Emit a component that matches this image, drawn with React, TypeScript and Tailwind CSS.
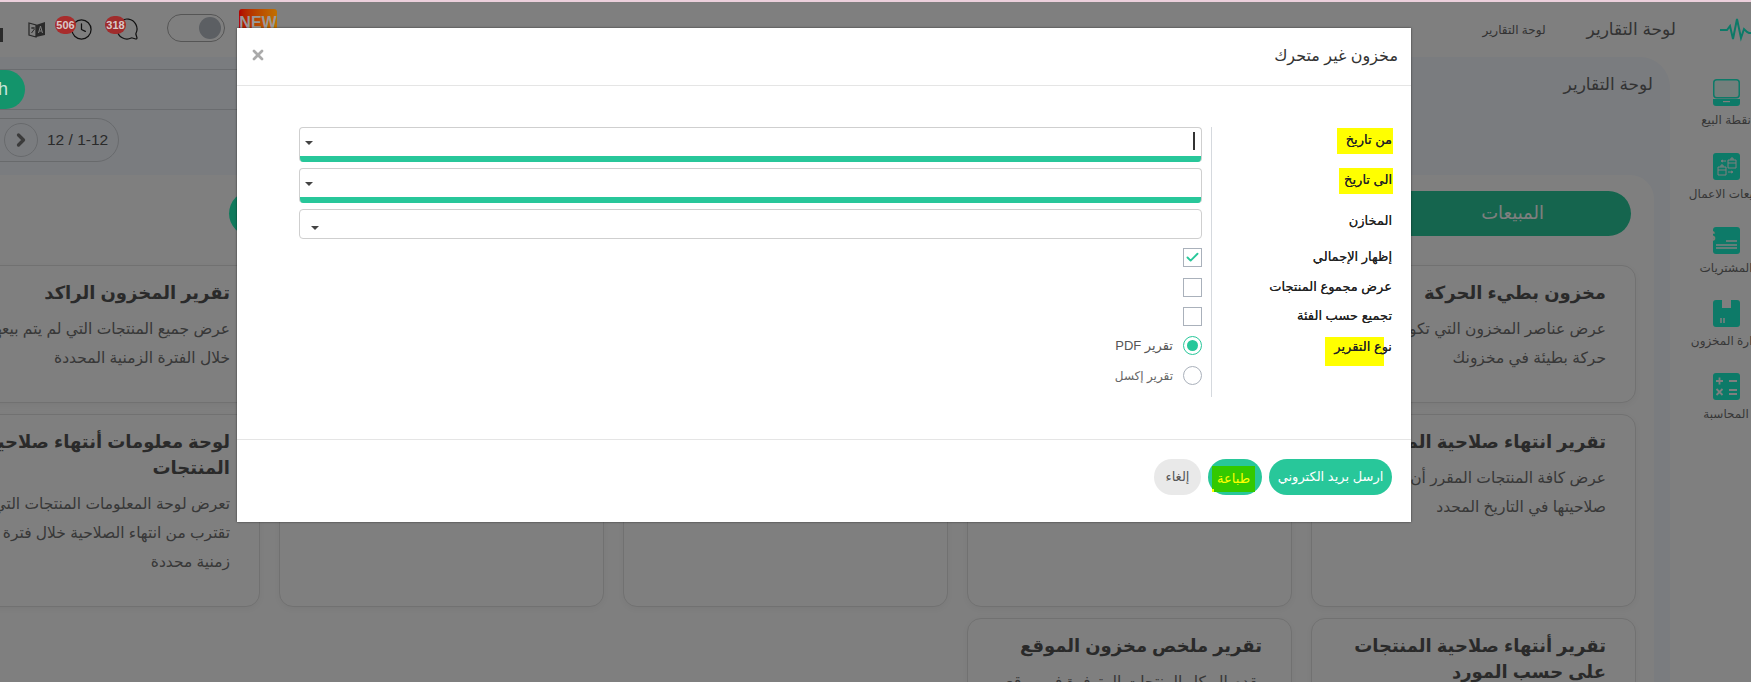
import React from "react";
import { Clock, MessageCircle, ChevronRight, X, Check } from "lucide-react";

function Card({ title, lines }: { title: string[]; lines: string[] }) {
  return (
    <div className="rounded-[14px] border border-[#e2e2e2] bg-white pt-[14px] pr-[29px] shadow-[0_2px_8px_rgba(0,0,0,0.05)] overflow-hidden">
      {title.map((t) => (
        <div key={t} className="text-[18px] leading-[26px] font-bold text-[#555] whitespace-nowrap">{t}</div>
      ))}
      <div className="mt-[8px]">
        {lines.map((l) => (
          <div key={l} className="text-[15.5px] leading-[29px] text-[#707070] whitespace-nowrap">{l}</div>
        ))}
      </div>
    </div>
  );
}

function Tile({ children }: { children: React.ReactNode }) {
  return <svg width="27" height="27" viewBox="0 0 27 27" className="block">{children}</svg>;
}

function NavItem({ label, children, gap }: { label: string; children: React.ReactNode; gap: string }) {
  return (
    <div className={`flex flex-col items-center w-[100px] mr-[-25px] ${gap}`}>
      {children}
      <div className="mt-[6px] text-[12px] leading-[16px] text-[#6f6f6f] whitespace-nowrap">{label}</div>
    </div>
  );
}

const T = "#1af4d0";

function Field({ bar, children }: { bar?: boolean; children?: React.ReactNode }) {
  return (
    <div className="relative h-[35px] rounded-[4px] border border-b-0 border-[#cfcfcf] bg-white overflow-hidden">
      <span className="absolute left-[5px] top-[13px] w-0 h-0 border-x-[4px] border-x-transparent border-t-[4px] border-t-[#444]" />
      {children}
      {bar && <div className="absolute left-0 right-0 bottom-0 h-[6px] bg-[#28c79a]" />}
    </div>
  );
}

function Box({ checked }: { checked?: boolean }) {
  return (
    <div className="flex h-[19px] w-[19px] items-center justify-center border border-[#aab1bb] bg-white">
      {checked && <Check size={15} strokeWidth={3} className="text-[#28c79a]" />}
    </div>
  );
}

function FormLabel({ text, mark, top }: { text: string; mark?: string; top: string }) {
  return (
    <div className={`flex ${top}`}>
      <span className={`h-[26px] pr-[1px] leading-[24px] text-[13px] text-[#222] [text-shadow:0_0_0.6px_#333] whitespace-nowrap ${mark ?? ""}`}>{text}</span>
    </div>
  );
}

export default function App() {
  return (
    <div dir="rtl" className="relative h-[682px] w-[1751px] overflow-hidden border-t-2 border-[#ecd0dc] bg-white font-['Liberation_Sans','Noto_Sans','DejaVu_Sans',sans-serif]">
      {/* header */}
      <header className="flex h-[55px] items-center">
        <svg width="34" height="26" viewBox="0 0 34 26" className="mr-[-3px] shrink-0">
          <path d="M0 13h7l3-4 3 13 4-20 4 19 3-9 3 3 2 1h5" fill="none" stroke={T} strokeWidth="2" />
        </svg>
        <div className="mr-[44px] text-[17px] text-[#666] whitespace-nowrap">لوحة التقارير</div>
        <div className="mr-[41px] text-[12px] text-[#666] whitespace-nowrap">لوحة التقارير</div>
        <div dir="ltr" className="mr-auto flex h-full items-center">
          <div className="relative h-full w-[300px]">
            <span className="absolute left-0 top-[26px] h-[14px] w-[3px] bg-[#555]" />
            <svg width="18" height="20" viewBox="0 0 18 20" className="absolute left-[28px] top-[18px]">
              <path d="M1 3l7 2v12l-7-2z" fill="#fff" stroke="#555" strokeWidth="1.3" />
              <path d="M8 5l9-3v13l-9 2z" fill="#555" />
              <path d="M3 8h4M5 7v2M3.500 13l3-4" stroke="#555" fill="none" />
              <path d="M10.500 13l2-7 2 7M11.200 11h2.600" stroke="#fff" fill="none" />
            </svg>
            <Clock size={23} strokeWidth={1.3} className="absolute left-[70px] top-[16px] text-[#222]" />
            <span className="absolute z-20 left-[55px] top-[14px] flex h-[18px] w-[21px] items-center justify-center rounded-full bg-[#a82c2c] text-[11px] font-bold text-[#d8c8c8]">506</span>
            <MessageCircle size={24} strokeWidth={1.2} className="absolute left-[115px] top-[15px] text-[#222] -scale-x-100" />
            <span className="absolute z-20 left-[105px] top-[14px] flex h-[18px] w-[21px] items-center justify-center rounded-full bg-[#a02c2c] text-[11px] font-bold text-[#d8c8c8]">318</span>
            <div className="absolute left-[167px] top-[12px] h-[28px] w-[58px] rounded-full border border-[#aaa] bg-white">
              <span className="absolute right-[3px] top-[2px] block h-[22px] w-[22px] rounded-full bg-[#b8bec6]" />
            </div>
            <div className="absolute z-20 left-[239px] top-[7px] flex h-[24px] w-[38px] justify-center overflow-hidden rounded-[3px] bg-gradient-to-r from-[#b00000] to-[#c07000] text-[16px] leading-[28px] font-bold text-[#9a9a9a]">NEW</div>
          </div>
        </div>
      </header>

      <div className="flex h-[625px]">
        {/* sidebar */}
        <aside className="flex w-[81px] shrink-0 flex-col items-start pt-[22px]">
          <NavItem label="نقطة البيع" gap="mb-[25px]">
            <Tile>
              <rect x="0.750" y="0.750" width="25.500" height="18" rx="3" fill="#e8fff9" stroke={T} strokeWidth="1.5" />
              <path d="M0 20h27v4a3 3 0 0 1-3 3H3a3 3 0 0 1-3-3z" fill={T} />
              <rect x="10" y="22" width="7" height="1.200" fill="#fff" />
            </Tile>
          </NavItem>
          <NavItem label="مبيعات الاعمال" gap="mb-[25px]">
            <Tile>
              <rect width="27" height="27" rx="3" fill={T} />
              <path d="M15 7h8v8h-8zM15 10h8M18 7V5h2v2M5 14h8v8H5zM5 17h8M8 14v-2h2v2M13 8H9M10 7l-2 1 2 1M15 19h4M18 18l2 1-2 1" fill="none" stroke="#fff" strokeWidth="1" />
            </Tile>
          </NavItem>
          <NavItem label="المشتريات" gap="mb-[24px]">
            <Tile>
              <rect width="27" height="27" rx="3" fill={T} />
              <text x="2" y="14" fontSize="15" fontWeight="700" fill="#fff" fontFamily="Liberation Sans">$</text>
              <path d="M13 14h11M3 18h21M3 21h21" stroke="#fff" strokeWidth="1.400" />
            </Tile>
          </NavItem>
          <NavItem label="إدارة المخزون" gap="mb-[24px]">
            <Tile>
              <path d="M3 0h6v8h9V0h6a3 3 0 0 1 3 3v21a3 3 0 0 1-3 3H3a3 3 0 0 1-3-3V3a3 3 0 0 1 3-3z" fill={T} />
              <path d="M8 18v5M11 18v5" stroke="#fff" strokeWidth="1.500" />
            </Tile>
          </NavItem>
          <NavItem label="المحاسبة" gap="">
            <Tile>
              <rect width="27" height="27" rx="3" fill={T} />
              <path d="M3 8h7M6.500 4.500v7M16 8h8M3.500 16l6 6M9.500 16l-6 6M16 17h8M16 21h8" stroke="#fff" strokeWidth="1.800" />
            </Tile>
          </NavItem>
        </aside>

        {/* panel */}
        <main className="min-w-0 flex-1 overflow-hidden rounded-tr-[30px] bg-[#f4f8fe]">
          <div className="flex h-[118px] justify-between">
            <div className="pr-[17px] pt-[15px] text-[17px] leading-[26px] text-[#666] whitespace-nowrap">لوحة التقارير</div>
            <div dir="ltr" className="w-[700px] pt-[12px]">
              <div className="h-[41px] border-y border-[#d5d9de]">
                <div className="relative z-20 ml-[-70px] flex h-[39px] w-[95px] items-center justify-end rounded-full bg-[#13946b] pr-[17px] text-[18px] text-[#c8e6dc]">Search</div>
              </div>
              <div className="mt-[8px] ml-[-40px] flex h-[44px] w-[159px] items-center rounded-full border border-[#d0d4d9]">
                <span className="ml-[3px] h-[34px] w-[34px] rounded-full border border-[#d0d4d9]" />
                <span className="ml-[6px] flex h-[34px] w-[34px] items-center justify-center rounded-full border border-[#d0d4d9]">
                  <ChevronRight size={20} strokeWidth={4} className="text-[#777]" />
                </span>
                <span className="ml-[9px] text-[15.5px] text-[#555] whitespace-nowrap">12 / 1-12</span>
              </div>
            </div>
          </div>
          <section className="mr-[16px] h-[507px] rounded-tr-[24px] bg-white pr-[18px] pt-[16px]">
            <div className="mr-[5px] flex h-[45px] w-[1402px] justify-between">
              <div className="flex w-[400px] items-center rounded-full bg-[#2acb9c] pr-[87px] text-[18px] text-[#fff]">
                <span className="whitespace-nowrap">المبيعات</span>
              </div>
              <div className="w-[400px] rounded-full bg-[#20f4b8]" />
            </div>
            <div className="mt-[29px] grid grid-cols-[repeat(5,325px)] grid-rows-[138px_193px_120px] gap-x-[19px] gap-y-[11px]">
              <Card title={["مخزون بطيء الحركة"]} lines={["عرض عناصر المخزون التي تكون", "حركة بطيئة في مخزونك"]} />
              <Card title={[]} lines={[]} />
              <Card title={[]} lines={[]} />
              <Card title={[]} lines={[]} />
              <Card title={["تقرير المخزون الراكد"]} lines={["عرض جميع المنتجات التي لم يتم بيعها", "خلال الفترة الزمنية المحددة"]} />
              <Card title={["تقرير انتهاء صلاحية المنتجات"]} lines={["عرض كافة المنتجات المقرر أن تنتهي", "صلاحيتها في التاريخ المحدد"]} />
              <Card title={[]} lines={[]} />
              <Card title={[]} lines={[]} />
              <Card title={[]} lines={[]} />
              <Card title={["لوحة معلومات أنتهاء صلاحية", "المنتجات"]} lines={["تعرض لوحة المعلومات المنتجات التي", "تقترب من انتهاء الصلاحية خلال فترة", "زمنية محددة"]} />
              <Card title={["تقرير أنتهاء صلاحية المنتجات", "على حسب المورد"]} lines={[]} />
              <Card title={["تقرير ملخص مخزون الموقع"]} lines={["يقدم الهيكل المنتجات المتوفرة في موقع"]} />
            </div>
          </section>
        </main>
      </div>

      {/* overlay */}
      <div className="absolute inset-0 z-10 bg-black/50" />

      {/* modal */}
      <div className="absolute left-[237px] top-[26px] z-30 flex h-[494px] w-[1174px] flex-col bg-white shadow-[0_0_2px_rgba(0,0,0,0.6)]">
        <div className="flex h-[58px] shrink-0 items-start justify-between border-b border-[#e5e5e5] pr-[13px] pl-[13px] pt-[16px]">
          <div className="text-[16px] leading-[24px] text-[#333]">مخزون غير متحرك</div>
          <X size={16} strokeWidth={4} className="mt-[3px] text-[#aaa]" />
        </div>
        <div className="flex flex-1 pt-[41px] pr-[18px]">
          <div className="h-[270px] w-[182px] shrink-0 border-l border-[#d5d9de]">
            <FormLabel text="من تاريخ" mark="w-[56px] bg-[#ffff00]" top="mt-[1px]" />
            <FormLabel text="الى تاريخ" mark="w-[54px] bg-[#ffff00]" top="mt-[14px]" />
            <FormLabel text="المخازن" top="mt-[15px]" />
            <FormLabel text="إظهار الإجمالي" top="mt-[10px]" />
            <FormLabel text="عرض مجموع المنتجات" top="mt-[4px]" />
            <FormLabel text="تجميع حسب الفئة" top="mt-[3px]" />
            <div className="relative mt-[4px] h-[26px]">
              <span className="absolute right-[9px] top-[3px] h-[29px] w-[59px] bg-[#ffff00]" />
              <span className="relative pr-[1px] text-[13px] leading-[24px] text-[#222] [text-shadow:0_0_0.6px_#333]">نوع التقرير</span>
            </div>
          </div>
          <div className="mr-[9px] flex w-[903px] flex-col">
            <Field bar>
              <span className="absolute right-[6px] top-[4px] h-[18px] w-[2px] bg-[#333]" />
            </Field>
            <div className="mt-[6px]"><Field bar /></div>
            <div className="relative mt-[6px] h-[30px] rounded-[4px] border border-[#cfcfcf] bg-white">
              <span className="absolute left-[11px] top-[16px] h-0 w-0 border-x-[4px] border-x-transparent border-t-[4px] border-t-[#444]" />
            </div>
            <div className="mt-[9px]"><Box checked /></div>
            <div className="mt-[11px]"><Box /></div>
            <div className="mt-[10px]"><Box /></div>
            <div className="mt-[10px] flex h-[19px] items-center gap-[10px]">
              <span className="flex h-[19px] w-[19px] items-center justify-center rounded-full border border-[#28c79a]">
                <span className="h-[11px] w-[11px] rounded-full bg-[#28c79a]" />
              </span>
              <span className="text-[13px] text-[#555]">تقرير PDF</span>
            </div>
            <div className="mt-[11px] flex h-[19px] items-center gap-[10px]">
              <span className="h-[19px] w-[19px] rounded-full border border-[#aab1bb]" />
              <span className="text-[12px] text-[#666]">تقرير إكسل</span>
            </div>
          </div>
        </div>
        <div className="flex h-[83px] shrink-0 items-start gap-[7px] border-t border-[#e5e5e5] pt-[19px] pr-[19px]">
          <button className="h-[36px] w-[123px] rounded-full bg-[#28c79a] text-[13px] text-white">ارسل بريد الكتروني</button>
          <button className="flex h-[36px] w-[54px] items-start justify-start rounded-full bg-[#28c79a]">
            <span className="relative mr-[7px] mt-[7px] flex h-[26px] w-[43px] items-center justify-center bg-[#33c900] text-[13px] text-[#ffff00]">
              طباعة
              <span className="absolute bottom-0 left-0 h-[3px] w-[2px] bg-[#ffff00]" />
            </span>
          </button>
          <button className="h-[36px] w-[47px] rounded-full bg-[#e9e9e9] text-[13px] text-[#555]">إلغاء</button>
        </div>
      </div>
    </div>
  );
}
